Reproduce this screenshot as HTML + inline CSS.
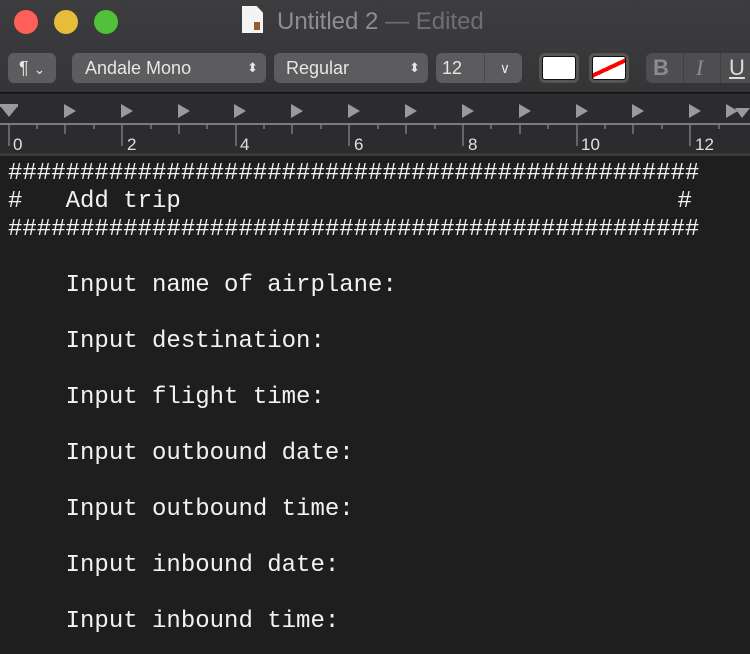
<!DOCTYPE html>
<html><head><meta charset="utf-8"><style>
*{margin:0;padding:0;box-sizing:border-box}
body{width:750px;height:654px;background:#1e1e1e;overflow:hidden;position:relative;font-family:"Liberation Sans",sans-serif}
.title{position:absolute;left:0;top:0;width:750px;height:93px;background:linear-gradient(#3d3d3f,#353537);border-bottom:1px solid #111}
.dot{position:absolute;top:10px;width:24px;height:24px;border-radius:50%}
.t{position:absolute;top:8px;left:277px;font-size:24px;color:#8e8e90}
.btn{position:absolute;top:53px;height:30px;background:#5c5c5e;border-radius:6px;color:#e6e6e6;font-size:18px;line-height:30px}
.ruler{position:absolute;left:0;top:94px;width:750px;height:62px;background:#2c2c2e;border-bottom:3px solid #3a3a3c}
.text{position:absolute;left:8px;top:160px;font-family:"Liberation Mono",monospace;font-size:24px;line-height:28px;color:#f2f2f2;white-space:pre}
</style></head><body>
<div class="title">
<div class="dot" style="left:14px;background:#fe5f57"></div>
<div class="dot" style="left:54px;background:#e5bd3a"></div>
<div class="dot" style="left:94px;background:#51c03a"></div>
<div style="position:absolute;left:242px;top:6px;width:21px;height:27px;background:#f4f4f4;clip-path:polygon(0 0,70% 0,100% 25%,100% 100%,0 100%)"><div style="position:absolute;left:12px;top:16px;width:6px;height:8px;background:#9a5a2a"></div></div>
<div class="t">Untitled 2 <span style="color:#6f6f71">— Edited</span></div>
<div class="btn" style="left:8px;width:48px;padding-left:11px">¶ <span style="font-size:14px">⌄</span></div>
<div class="btn" style="left:72px;width:194px;padding-left:13px">Andale Mono<span style="position:absolute;right:8px;font-size:13px">⬍</span></div>
<div class="btn" style="left:274px;width:154px;padding-left:12px">Regular<span style="position:absolute;right:8px;font-size:13px">⬍</span></div>
<div class="btn" style="left:436px;width:86px;padding-left:6px">12<span style="position:absolute;left:48px;top:0;width:1px;height:30px;background:#4a4a4c"></span><span style="position:absolute;right:12px;font-size:14px">∨</span></div>
<div style="position:absolute;left:539px;top:53px;width:40px;height:30px;border-radius:6px;background:#555;padding:3px"><div style="width:100%;height:100%;background:#fff;border-radius:3px;border:1px solid #111"></div></div>
<div style="position:absolute;left:589px;top:53px;width:40px;height:30px;border-radius:6px;background:#555;padding:3px"><div style="width:100%;height:100%;background:#fff;border-radius:3px;border:1px solid #111;background:linear-gradient(155deg,#fff 44%,#f00 44%,#f00 56%,#fff 56%)"></div></div>
<div class="btn" style="left:646px;width:110px;background:#4e4e50;color:#8c8c8e;font-weight:bold;font-size:22px;padding-left:7px">B<span style="position:absolute;left:37px;top:0;width:1px;height:30px;background:#3f3f41"></span><span style="position:absolute;left:50px;font-style:italic;font-weight:normal;font-family:'Liberation Serif',serif">I</span><span style="position:absolute;left:74px;top:0;width:1px;height:30px;background:#3f3f41"></span><span style="position:absolute;left:83px;font-weight:normal;color:#ddd;text-decoration:underline">U</span></div>
</div>
<div class="ruler">
<svg width="750" height="62" style="position:absolute;left:0;top:0">
<line x1="0" y1="30" x2="750" y2="30" stroke="#7a7a7c" stroke-width="2"/>
<g fill="#9a9a9c">
<rect x="0" y="10" width="18" height="3"/><polygon points="1,13 17,13 9,23"/>
<polygon points="64,10 76,17 64,24"/><polygon points="121,10 133,17 121,24"/><polygon points="178,10 190,17 178,24"/><polygon points="234,10 246,17 234,24"/><polygon points="291,10 303,17 291,24"/><polygon points="348,10 360,17 348,24"/><polygon points="405,10 417,17 405,24"/><polygon points="462,10 474,17 462,24"/><polygon points="519,10 531,17 519,24"/><polygon points="576,10 588,17 576,24"/><polygon points="632,10 644,17 632,24"/><polygon points="689,10 701,17 689,24"/><polygon points="726,10 738,17 726,24"/><polygon points="735,14 750,14 742,24"/>
</g>
<g stroke="#7a7a7c" stroke-width="1.5">
<line x1="9" y1="30" x2="9" y2="52"/><line x1="122" y1="30" x2="122" y2="52"/><line x1="236" y1="30" x2="236" y2="52"/><line x1="349" y1="30" x2="349" y2="52"/><line x1="463" y1="30" x2="463" y2="52"/><line x1="577" y1="30" x2="577" y2="52"/><line x1="690" y1="30" x2="690" y2="52"/>
<line x1="65" y1="30" x2="65" y2="40"/><line x1="179" y1="30" x2="179" y2="40"/><line x1="292" y1="30" x2="292" y2="40"/><line x1="406" y1="30" x2="406" y2="40"/><line x1="520" y1="30" x2="520" y2="40"/><line x1="633" y1="30" x2="633" y2="40"/>
<line x1="37" y1="30" x2="37" y2="35"/><line x1="94" y1="30" x2="94" y2="35"/><line x1="151" y1="30" x2="151" y2="35"/><line x1="207" y1="30" x2="207" y2="35"/><line x1="264" y1="30" x2="264" y2="35"/><line x1="321" y1="30" x2="321" y2="35"/><line x1="378" y1="30" x2="378" y2="35"/><line x1="435" y1="30" x2="435" y2="35"/><line x1="491" y1="30" x2="491" y2="35"/><line x1="548" y1="30" x2="548" y2="35"/><line x1="605" y1="30" x2="605" y2="35"/><line x1="662" y1="30" x2="662" y2="35"/><line x1="719" y1="30" x2="719" y2="35"/>
</g>
<g fill="#e0e0e0" font-family="Liberation Sans" font-size="17">
<text x="13" y="56">0</text><text x="127" y="56">2</text><text x="240" y="56">4</text><text x="354" y="56">6</text><text x="468" y="56">8</text><text x="581" y="56">10</text><text x="695" y="56">12</text>
</g></svg>
</div>
<div class="text">################################################
#   Add trip                                  <span style="position:relative;left:7px">#</span>
################################################

    Input name of airplane:

    Input destination:

    Input flight time:

    Input outbound date:

    Input outbound time:

    Input inbound date:

    Input inbound time:</div>
</body></html>
